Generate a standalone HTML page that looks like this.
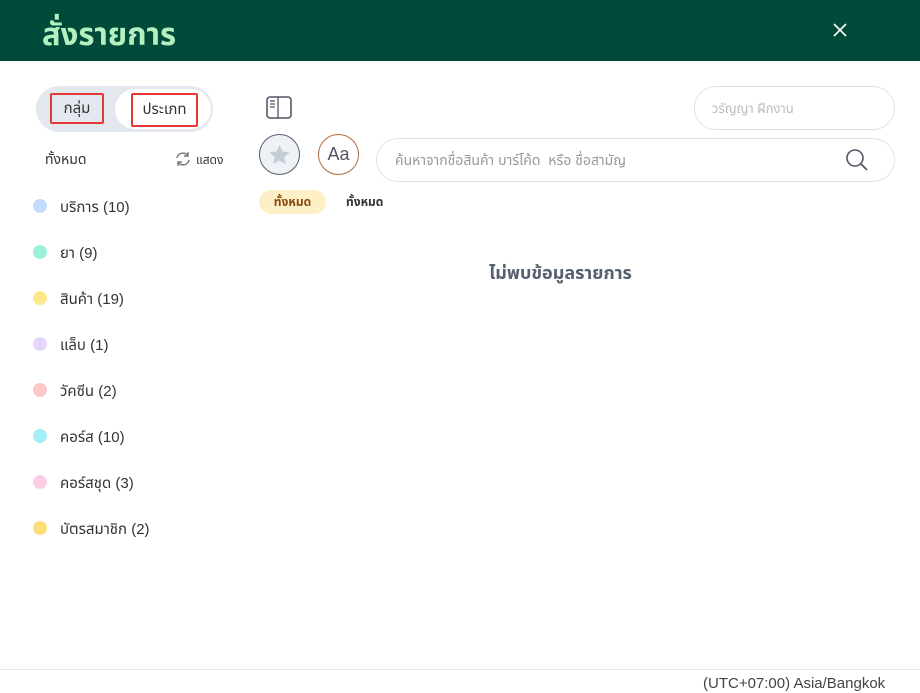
<!DOCTYPE html>
<html><head><meta charset="utf-8"><style>
*{box-sizing:border-box;margin:0;padding:0}
body{width:920px;height:684px;overflow:hidden;background:#fff;font-family:"Liberation Sans","Noto Sans Thai","Loma","Garuda",sans-serif;color:#333;position:relative}
.hd{position:absolute;left:0;top:0;width:920px;height:61px;background:#004a3a}
.hd .t{position:absolute;left:42px;top:12px;font-size:31px;color:#b4efc0;font-weight:bold}
.a{position:absolute}
.dot{position:absolute;left:33px;width:14px;height:14px;border-radius:50%}
.it{position:absolute;left:60px;font-size:15px;color:#333}
</style></head><body>
<div class="hd"><div class="t">สั่งรายการ</div>
<svg class="a" style="left:832px;top:22px" width="16" height="16"><path d="M2 2L14 14M14 2L2 14" stroke="#fff" stroke-width="1.6"/></svg></div>

<div class="a" style="left:36px;top:86px;width:177px;height:46px;border-radius:23px;background:#e3e8ef"></div>
<div class="a" style="left:115px;top:89px;width:96px;height:40px;border-radius:20px;background:#fff"></div>
<div class="a" style="left:50px;top:93px;width:54px;height:31px;border:2px solid #e53935;border-radius:2px;font-size:15px;text-align:center;line-height:27px">กลุ่ม</div>
<div class="a" style="left:131px;top:93px;width:67px;height:34px;border:2px solid #e53935;border-radius:2px;font-size:15px;text-align:center;line-height:30px">ประเภท</div>

<svg class="a" style="left:266px;top:96px" width="26" height="24"><rect x="1" y="1" width="24" height="21" rx="3" fill="none" stroke="#556" stroke-width="1.6"/><path d="M12 1V22M4 5H9M4 8H9M4 11H9" stroke="#556" stroke-width="1.3"/></svg>

<div class="a" style="left:694px;top:86px;width:201px;height:44px;border:1px solid #dde2e8;border-radius:22px;font-size:13px;color:#bbb;padding:12px 0 0 17px">วรัญญา ฝึกงาน</div>

<div class="a" style="left:45px;top:150px;font-size:14px">ทั้งหมด</div>
<svg class="a" style="left:175px;top:151px" width="16" height="16"><path d="M2 7a6 6 0 0 1 11-2M14 9a6 6 0 0 1-11 2" fill="none" stroke="#777" stroke-width="1.4"/><path d="M13 1v4h-4M3 15v-4h4" fill="none" stroke="#777" stroke-width="1.4"/></svg>
<div class="a" style="left:196px;top:152px;font-size:12px">แสดง</div>

<div class="a" style="left:259px;top:134px;width:41px;height:41px;border:1.5px solid #555e6c;border-radius:50%;background:#eef1f5"></div>
<svg class="a" style="left:268px;top:144px" width="23" height="22"><path d="M11.5 1l3 6.5 7 .8-5.2 4.8 1.5 7-6.3-3.6-6.3 3.6 1.5-7L1.5 8.3l7-.8z" fill="#c6ccd6"/></svg>
<div class="a" style="left:318px;top:134px;width:41px;height:41px;border:1.5px solid #b06a3c;border-radius:50%;font-size:18px;color:#556;text-align:center;line-height:38px">Aa</div>

<div class="a" style="left:376px;top:138px;width:519px;height:44px;border:1px solid #dde2e8;border-radius:22px;font-size:14px;color:#999;padding:12px 0 0 18px">ค้นหาจากชื่อสินค้า บาร์โค้ด&nbsp; หรือ ชื่อสามัญ</div>
<svg class="a" style="left:845px;top:148px" width="24" height="24"><circle cx="10" cy="10" r="8" fill="none" stroke="#556" stroke-width="1.6"/><path d="M16 16L22 22" stroke="#556" stroke-width="1.8"/></svg>

<div class="a" style="left:259px;top:190px;width:67px;height:24px;border-radius:12px;background:#fdf0c7;font-size:12px;font-weight:bold;color:#8a4a10;text-align:center;line-height:24px">ทั้งหมด</div>
<div class="a" style="left:346px;top:194px;font-size:12px;font-weight:bold">ทั้งหมด</div>

<div class="a" style="left:489px;top:261px;font-size:18px;font-weight:bold;color:#556070">ไม่พบข้อมูลรายการ</div>

<div class="dot" style="top:199px;background:#c5dcff"></div><div class="it" style="top:196px">บริการ (10)</div>
<div class="dot" style="top:245px;background:#9ef0dc"></div><div class="it" style="top:242px">ยา (9)</div>
<div class="dot" style="top:291px;background:#fbe88a"></div><div class="it" style="top:288px">สินค้า (19)</div>
<div class="dot" style="top:337px;background:#e6d6fb"></div><div class="it" style="top:334px">แล็บ (1)</div>
<div class="dot" style="top:383px;background:#fcc8c8"></div><div class="it" style="top:380px">วัคซีน (2)</div>
<div class="dot" style="top:429px;background:#a6eef6"></div><div class="it" style="top:426px">คอร์ส (10)</div>
<div class="dot" style="top:475px;background:#fbcfe6"></div><div class="it" style="top:472px">คอร์สชุด (3)</div>
<div class="dot" style="top:521px;background:#fbe07a"></div><div class="it" style="top:518px">บัตรสมาชิก (2)</div>

<div class="a" style="left:0;top:669px;width:920px;height:1px;background:#e3e6ea"></div>
<div class="a" style="left:703px;top:675px;font-size:15px;line-height:18px;color:#444;white-space:nowrap">(UTC+07:00) Asia/Bangkok</div>
</body></html>
